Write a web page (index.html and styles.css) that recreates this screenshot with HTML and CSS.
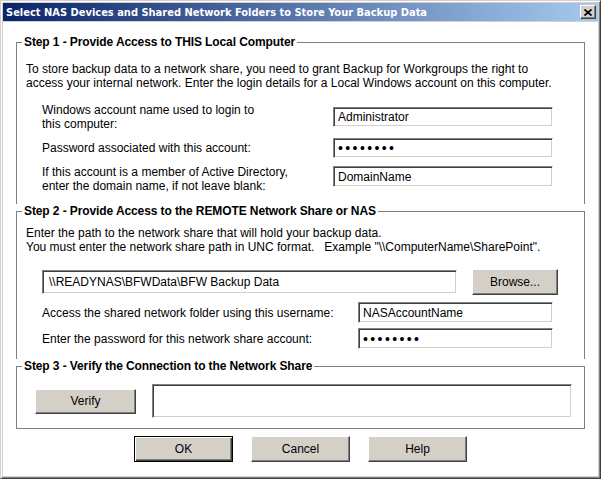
FILE: index.html
```html
<!DOCTYPE html>
<html>
<head>
<meta charset="utf-8">
<title>Select NAS Devices</title>
<link rel="stylesheet" href="styles.css">
</head>
<body>
<div class="window">
  <div class="titlebar">
    <span class="title">Select NAS Devices and Shared Network Folders to Store Your Backup Data</span>
    <div class="close"><svg width="8" height="7" viewBox="0 0 8 7"><path d="M0.5 0.5 L7.5 6.5 M7.5 0.5 L0.5 6.5" stroke="#000" stroke-width="1.7" fill="none"/></svg></div>
  </div>
  <div class="client">
    <div class="group">
      <fieldset class="step step1">
        <legend>Step 1 - Provide Access to THIS Local Computer</legend>
        <p class="intro">To store backup data to a network share, you need to grant Backup for Workgroups the right to<br>access your internal network. Enter the login details for a Local Windows account on this computer.</p>
        <div class="form form1">
          <label class="lbl">Windows account name used to login to<br>this computer:</label>
          <input class="field f1" type="text" value="Administrator">
          <label class="lbl">Password associated with this account:</label>
          <input class="field f1 pw" type="password" value="xxxxxxxx">
          <label class="lbl">If this account is a member of Active Directory,<br>enter the domain name, if not leave blank:</label>
          <input class="field f1 f1-last" type="text" value="DomainName">
        </div>
      </fieldset>
      <fieldset class="step step2">
        <legend>Step 2 - Provide Access to the REMOTE Network Share or NAS</legend>
        <p class="intro">Enter the path to the network share that will hold your backup data.<br>You must enter the network share path in UNC format.&nbsp;&nbsp; Example "\\ComputerName\SharePoint".</p>
        <div class="pathrow">
          <input class="field path" type="text" value="\\READYNAS\BFWData\BFW Backup Data">
          <button class="btn browse">Browse...</button>
        </div>
        <div class="form form2">
          <label class="lbl">Access the shared network folder using this username:</label>
          <input class="field f2" type="text" value="NASAccountName">
          <label class="lbl">Enter the password for this network share account:</label>
          <input class="field f2 pw" type="password" value="xxxxxxxx">
        </div>
      </fieldset>
      <fieldset class="step step3">
        <legend>Step 3 - Verify the Connection to the Network Share</legend>
        <div class="verifyrow">
          <button class="btn verify">Verify</button>
          <div class="field result"></div>
        </div>
      </fieldset>
    </div>
    <div class="buttons">
      <button class="btn dlg default">OK</button>
      <button class="btn dlg">Cancel</button>
      <button class="btn dlg">Help</button>
    </div>
  </div>
</div>
</body>
</html>
```
FILE: styles.css
```css
html, body {
  margin: 0;
  padding: 0;
}
body {
  width: 601px;
  height: 479px;
  overflow: hidden;
  background: #d4d0c8;
  font-family: "Liberation Sans", Arial, sans-serif;
  font-size: 12px;
  color: #000;
}
.window {
  box-sizing: border-box;
  width: 601px;
  height: 479px;
  display: flex;
  flex-direction: column;
  background: #d4d0c8;
  border: 1px solid;
  border-color: #d4d0c8 #404040 #404040 #d4d0c8;
  box-shadow: inset 1px 1px #fff, inset -1px -1px #808080;
  padding: 2px;
}
.titlebar {
  box-sizing: border-box;
  height: 18px;
  flex: none;
  display: flex;
  align-items: center;
  justify-content: space-between;
  background: linear-gradient(to right, #0a246a, #a6caf0);
  padding: 0 2px 0 3px;
}
.title {
  color: #fff;
  font-family: "DejaVu Sans Condensed", "DejaVu Sans", sans-serif;
  font-weight: bold;
  font-size: 11px;
  white-space: nowrap;
}
.close {
  box-sizing: border-box;
  width: 16px;
  height: 14px;
  display: flex;
  align-items: center;
  justify-content: center;
  background: #d4d0c8;
  border: 1px solid;
  border-color: #fff #404040 #404040 #fff;
  box-shadow: inset -1px -1px #808080;
}
.close svg {
  display: block;
}
.client {
  flex: 1;
  margin-top: 1px;
  background: #fff;
  padding: 13px 13px 0 13px;
}
.step {
  margin: 0;
  min-width: 0;
  padding: 0 9px;
  border: 1px solid #808080;
}
.step1, .step2 {
  border-bottom: none;
}
.step legend {
  margin-left: -4px;
  padding: 0 2px;
  font-weight: bold;
  font-size: 12px;
  line-height: 14px;
  letter-spacing: -0.1px;
}
.step1 {
  padding-top: 13px;
  padding-bottom: 11px;
}
.step2 {
  padding-top: 8px;
  padding-bottom: 10px;
}
.step3 {
  padding-top: 11px;
  padding-bottom: 10px;
}
.intro {
  margin: 0;
  line-height: 14px;
  white-space: nowrap;
}
.form {
  display: grid;
  align-items: center;
  margin-left: 16px;
}
.form1 {
  margin-top: 13px;
  grid-template-columns: 291px 220px;
  row-gap: 7px;
}
.form2 {
  margin-top: 7px;
  grid-template-columns: 316px 195px;
  grid-auto-rows: 21px;
  row-gap: 5px;
}
.lbl {
  line-height: 14px;
  white-space: nowrap;
}
.field {
  box-sizing: border-box;
  margin: 0;
  padding: 0 0 0 4px;
  background: #fff;
  border: 1px solid;
  border-color: #808080 #fff #fff #808080;
  box-shadow: inset 1px 1px #404040, inset -1px -1px #d4d0c8;
  font-family: "Liberation Sans", Arial, sans-serif;
  font-size: 12px;
  color: #000;
  outline: none;
}
.f1 {
  width: 220px;
  height: 20px;
}
.f1-last {
  height: 21px;
  align-self: start;
  margin-top: 1px;
}
.f2 {
  width: 195px;
  height: 21px;
}
.pw {
  font-size: 14px;
  letter-spacing: 2.4px;
}
.pathrow {
  display: flex;
  align-items: center;
  margin-top: 15px;
  margin-left: 16px;
  height: 26px;
}
.path {
  width: 415px;
  height: 24px;
  padding-left: 6px;
}
.btn {
  box-sizing: border-box;
  margin: 0;
  padding: 0;
  background: #d4d0c8;
  border: 1px solid;
  border-color: #fff #404040 #404040 #fff;
  box-shadow: inset -1px -1px #808080;
  font-family: "Liberation Sans", Arial, sans-serif;
  font-size: 12px;
  color: #000;
}
.browse {
  margin-left: 15px;
  width: 86px;
  height: 26px;
}
.verifyrow {
  display: flex;
  align-items: center;
  height: 34px;
}
.verify {
  margin-left: 9px;
  width: 101px;
  height: 25px;
}
.result {
  margin-left: 16px;
  width: 420px;
  height: 34px;
}
.buttons {
  display: flex;
  justify-content: center;
  gap: 18px;
  margin-top: 7px;
}
.dlg {
  width: 99px;
  height: 26px;
}
.default {
  border: 1px solid #000;
  box-shadow: inset 1px 1px #fff, inset -1px -1px #404040, inset -2px -2px #808080;
}
```
